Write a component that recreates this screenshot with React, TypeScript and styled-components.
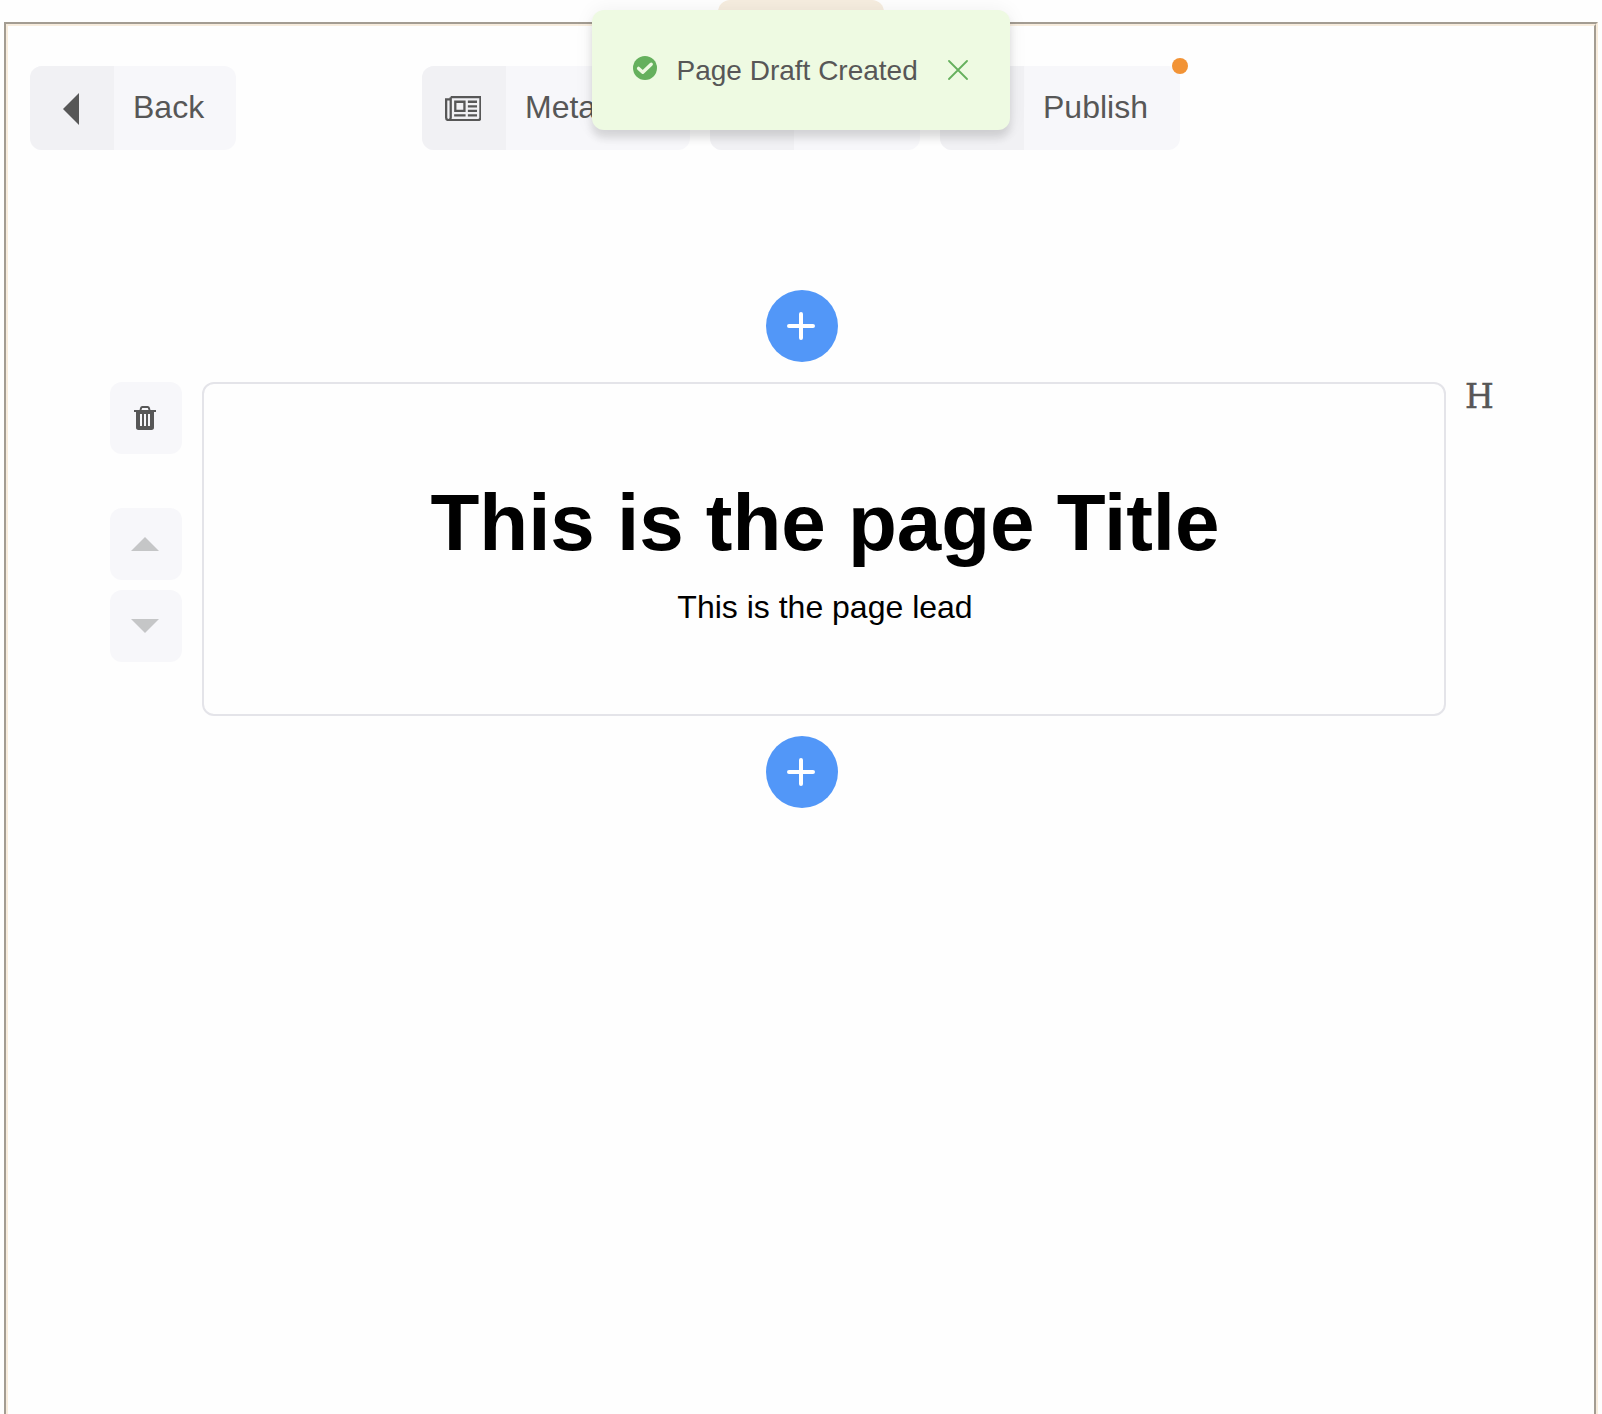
import React from "react";
import styled, { createGlobalStyle } from "styled-components";

const GlobalStyle = createGlobalStyle`
  * { box-sizing: border-box; }
  body {
    margin: 0;
    background: #fefefe;
    color: #575757;
    font-family: "Liberation Sans", Arial, sans-serif;
    overflow: hidden;
  }
  button { font: inherit; color: inherit; border: 0; padding: 0; cursor: pointer; }
  svg { display: block; }
`;

const Page = styled.div`
  position: relative;
  height: 100vh;
  padding: 22px 4px 0;
  overflow: hidden;
`;

const Frame = styled.main`
  height: calc(100vh - 22px);
  border: 4px groove #f7ecdd;
  border-bottom: 0;
`;

const DropdownTab = styled.div`
  position: absolute;
  top: 0;
  left: calc(50% - 83px);
  width: 166px;
  height: 48px;
  border-radius: 12px;
  background: #f6eddf;
`;

const Toolbar = styled.header`
  display: grid;
  grid-template-columns: 1fr auto 1fr;
  padding: 40px 22px 0;
`;

const ToolGroup = styled.div`
  display: flex;
  gap: 20px;
`;

const ToolButton = styled.button<{ $width: number }>`
  position: relative;
  display: flex;
  justify-self: start;
  width: ${(p) => p.$width}px;
  height: 84px;
  border-radius: 12px;
  background: #f7f7fa;
  font-size: 32px;
  line-height: 82px;
`;

const IconCell = styled.span`
  display: flex;
  align-items: center;
  justify-content: center;
  flex: none;
  width: 84px;
  height: 84px;
  margin-right: 19px;
  padding: 1px 2px 0 0;
  border-radius: 12px 0 0 12px;
  background: #f1f1f4;
`;

const Dot = styled.span`
  position: absolute;
  top: -8px;
  right: -8px;
  width: 16px;
  height: 16px;
  border-radius: 50%;
  background: #f29335;
`;

const Editor = styled.section`
  display: flex;
  flex-direction: column;
  align-items: center;
  gap: 20px;
  margin-top: 140px;
`;

const AddButton = styled.button`
  display: grid;
  place-items: center;
  width: 72px;
  height: 72px;
  margin-left: 2px;
  border-radius: 50%;
  background: #5297f8;
`;

const BlockRow = styled.div`
  display: flex;
  align-self: stretch;
  gap: 20px;
  padding-left: 102px;
`;

const BlockControls = styled.div`
  display: flex;
  flex-direction: column;
  gap: 10px;
`;

const ControlButton = styled.button<{ $spaced?: boolean }>`
  display: grid;
  place-items: center;
  width: 72px;
  height: 72px;
  margin-bottom: ${(p) => (p.$spaced ? 44 : 0)}px;
  padding-right: 2px;
  border-radius: 12px;
  background: #f7f7fa;
`;

const Card = styled.article`
  flex: none;
  width: 1244px;
  height: 334px;
  padding: 93px 0 0 2px;
  border: 2px solid #e4e4e9;
  border-radius: 12px;
  color: #000;
  text-align: center;
`;

const Title = styled.h1`
  margin: 0;
  font-size: 80px;
  line-height: 92px;
  letter-spacing: -0.04px;
`;

const Lead = styled.p`
  margin: 20px 0 0;
  font-size: 32px;
  line-height: 36px;
`;

const BlockType = styled.span`
  font-family: "DejaVu Serif", serif;
  font-size: 33px;
  line-height: 30px;
  margin-left: -1px;
  -webkit-text-stroke: 0.5px #575757;
`;

const Toast = styled.div`
  position: absolute;
  top: 10px;
  left: 592px;
  display: flex;
  align-items: center;
  width: 418px;
  height: 120px;
  padding: 0 40px;
  border-radius: 12px;
  background: #eefae2;
  box-shadow: 0 8px 8px rgba(0, 0, 0, 0.12), 0 0 20px rgba(0, 0, 0, 0.06);
  font-size: 28px;
`;

const ToastIcon = styled.span`
  margin: 0 20px 5px 0.5px;
`;

const ToastText = styled.span`
  padding-top: 2px;
`;

const ToastClose = styled.button`
  margin-left: auto;
  padding: 0 2px 1px 0;
  background: none;
`;

const ArrowLeft = () => (
  <svg width="16" height="32" viewBox="0 0 16 32" fill="#575757">
    <path d="M16 0v32L0 16z" />
  </svg>
);

const NewsIcon = () => (
  <svg width="36.6" height="25.2" viewBox="0 0 16 11">
    <g fill="none" stroke="#575757">
      <path d="M2.5.5h13v9a1 1 0 0 1-1 1h-13a1 1 0 0 1-1-1v-8h2" />
      <path d="M2.5 .5v9a1 1 0 0 1-1 1" />
      <path d="M4.5 2.5h4v4h-4z" />
      <path d="M10 2.5h4M10 4.5h4M10 6.5h4M10 8.5h4M4 8.5h5" />
    </g>
  </svg>
);

const TrashIcon = () => (
  <svg width="22" height="24" viewBox="0 0 11 12" fill="#575757">
    <path d="M3.2 2 3.7.7Q3.9.5 4.2.5h2.6q.3 0 .5.2L7.8 2" fill="none" stroke="#575757" />
    <path d="M0 2h11v1h-1v7.6A1.35 1.35 0 0 1 8.7 12H2.3A1.35 1.35 0 0 1 1 10.6V3H0z" />
    <path d="M3.5 4v6M5.5 4v6M7.5 4v6" stroke="#f7f7fa" />
  </svg>
);

const Caret = ({ down = false }: { down?: boolean }) => (
  <svg width="28" height="14" viewBox="0 0 28 14" fill="#c5c6c7">
    <path d={down ? "M0 0h28L14 14z" : "M0 14h28L14 0z"} />
  </svg>
);

const Plus = () => (
  <svg width="30" height="30" viewBox="0 0 30 30" stroke="#fff" strokeWidth="4" strokeLinecap="round">
    <path d="M2 15h24M14 3v24" />
  </svg>
);

const CheckIcon = () => (
  <svg width="24" height="24" viewBox="0 0 24 24">
    <circle cx="12" cy="12" r="12" fill="#65b05d" />
    <path d="m5.6 12.4 4.2 3.8 8.4-8" fill="none" stroke="#eefae2" strokeWidth="3.4" strokeLinecap="round" strokeLinejoin="round" />
  </svg>
);

const CloseIcon = () => (
  <svg width="20" height="20" viewBox="0 0 20 20" stroke="#65b05d" strokeWidth="1.8" strokeLinecap="round">
    <path d="m1 1 18 18M19 1 1 19" />
  </svg>
);

export default function App() {
  return (
    <Page>
      <GlobalStyle />
      <DropdownTab />
      <Frame>
        <Toolbar>
          <ToolButton $width={206}>
            <IconCell><ArrowLeft /></IconCell>
            Back
          </ToolButton>
          <ToolGroup>
            <ToolButton $width={268}>
              <IconCell><NewsIcon /></IconCell>
              Metadata
            </ToolButton>
            <ToolButton $width={210}>
              <IconCell />
            </ToolButton>
            <ToolButton $width={240}>
              <IconCell />
              Publish
              <Dot />
            </ToolButton>
          </ToolGroup>
        </Toolbar>
        <Editor>
          <AddButton aria-label="Add"><Plus /></AddButton>
          <BlockRow>
            <BlockControls>
              <ControlButton $spaced><TrashIcon /></ControlButton>
              <ControlButton><Caret /></ControlButton>
              <ControlButton><Caret down /></ControlButton>
            </BlockControls>
            <Card>
              <Title>This is the page Title</Title>
              <Lead>This is the page lead</Lead>
            </Card>
            <BlockType>H</BlockType>
          </BlockRow>
          <AddButton aria-label="Add"><Plus /></AddButton>
        </Editor>
      </Frame>
      <Toast>
        <ToastIcon><CheckIcon /></ToastIcon>
        <ToastText>Page Draft Created</ToastText>
        <ToastClose><CloseIcon /></ToastClose>
      </Toast>
    </Page>
  );
}
